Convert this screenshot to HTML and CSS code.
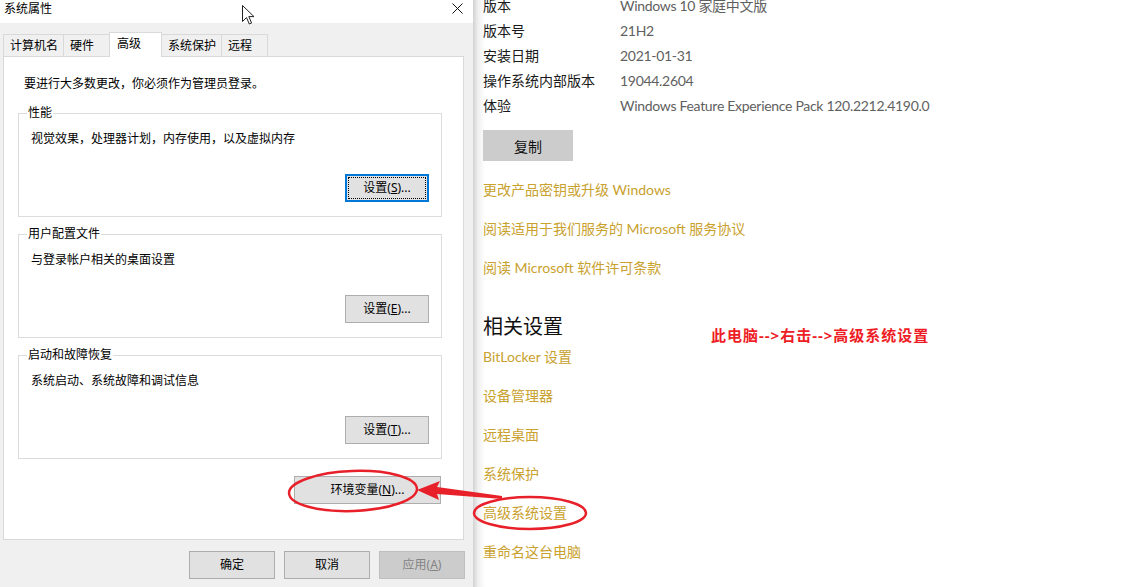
FILE: index.html
```html
<!DOCTYPE html>
<html>
<head>
<meta charset="UTF-8">
<title>系统属性</title>
<link rel="stylesheet" href="styles.css">
</head>
<body>
<div class="screen">
  <div class="dialog">
    <div class="titlebar">
      <span class="title">系统属性</span>
      <svg class="close" width="11" height="11" viewBox="0 0 11 11"><path d="M0.5 0.5L10.5 10.5M10.5 0.5L0.5 10.5" stroke="#111" stroke-width="1"/></svg>
    </div>
    <div class="tabs">
      <span class="tab">计算机名</span>
      <span class="tab">硬件</span>
      <span class="tab active">高级</span>
      <span class="tab">系统保护</span>
      <span class="tab">远程</span>
    </div>
    <div class="panel">
      <p class="note">要进行大多数更改，你必须作为管理员登录。</p>
      <fieldset class="group">
        <legend>性能</legend>
        <p class="desc">视觉效果，处理器计划，内存使用，以及虚拟内存</p>
        <div class="group-actions"><button class="btn focus">设置(<u>S</u>)...</button></div>
      </fieldset>
      <fieldset class="group">
        <legend>用户配置文件</legend>
        <p class="desc">与登录帐户相关的桌面设置</p>
        <div class="group-actions"><button class="btn">设置(<u>E</u>)...</button></div>
      </fieldset>
      <fieldset class="group">
        <legend>启动和故障恢复</legend>
        <p class="desc">系统启动、系统故障和调试信息</p>
        <div class="group-actions"><button class="btn">设置(<u>T</u>)...</button></div>
      </fieldset>
      <div class="env"><button class="btn wide">环境变量(<u>N</u>)...</button></div>
    </div>
    <div class="footer">
      <button class="btn foot">确定</button>
      <button class="btn foot">取消</button>
      <button class="btn foot disabled">应用(<u>A</u>)</button>
    </div>
  </div>

  <div class="settings">
    <dl class="specs">
      <div class="row"><dt>版本</dt><dd>Windows 10 家庭中文版</dd></div>
      <div class="row"><dt>版本号</dt><dd>21H2</dd></div>
      <div class="row"><dt>安装日期</dt><dd>2021-01-31</dd></div>
      <div class="row"><dt>操作系统内部版本</dt><dd>19044.2604</dd></div>
      <div class="row"><dt>体验</dt><dd>Windows Feature Experience Pack 120.2212.4190.0</dd></div>
    </dl>
    <button class="copy">复制</button>
    <ul class="links">
      <li>更改产品密钥或升级 Windows</li>
      <li>阅读适用于我们服务的 Microsoft 服务协议</li>
      <li>阅读 Microsoft 软件许可条款</li>
    </ul>
    <h2 class="heading">相关设置</h2>
    <ul class="links related">
      <li>BitLocker 设置</li>
      <li>设备管理器</li>
      <li>远程桌面</li>
      <li>系统保护</li>
      <li>高级系统设置</li>
      <li>重命名这台电脑</li>
    </ul>
  </div>

  <div class="hint">此电脑--&gt;右击--&gt;高级系统设置</div>

  <svg class="marks" width="1123" height="587" viewBox="0 0 1123 587">
    <ellipse cx="353" cy="491" rx="64" ry="20" fill="none" stroke="#e8202a" stroke-width="2.5" transform="rotate(-2 353 491)"/>
    <ellipse cx="530" cy="513" rx="56" ry="16" fill="none" stroke="#e8202a" stroke-width="2.5"/>
    <polygon points="417,490 440,481 437,487 502,496 502,499 437,494 439,500" fill="#e8202a"/>
  </svg>

  <svg class="cursor" width="13" height="20" viewBox="0 0 13 20">
    <path d="M0.5 0.5L0.5 16.5L4.5 12.5L7.3 19L9.6 18L6.8 11.6L12 11.6Z" fill="#fff" stroke="#222" stroke-width="1"/>
  </svg>
</div>
</body>
</html>
```

FILE: styles.css
```css
* {
    box-sizing: border-box;
}

html, body {
    margin: 0;
    padding: 0;
}

body {
    font-family: "Noto Sans", "Noto Sans CJK SC", sans-serif;
    background: #fff;
    color: #000;
}

.screen {
    position: relative;
    display: flex;
    width: 1123px;
    height: 587px;
    overflow: hidden;
}

/* dialog */

.dialog {
    width: 473px;
    flex: none;
    background: #f0f0f0;
    font-size: 12px;
    line-height: 16px;
}

.titlebar {
    display: flex;
    justify-content: space-between;
    align-items: flex-start;
    height: 23px;
    padding: 1px 10px 0 4px;
    background: #fff;
    margin-bottom: 9px;
}

.close {
    margin-top: 2px;
}

.tabs {
    display: flex;
    align-items: flex-end;
    height: 24px;
    padding-left: 3px;
}

.tab {
    height: 22px;
    min-width: 47px;
    padding: 3px 5px 0 6px;
    border: 1px solid #d9d9d9;
    border-bottom: none;
    margin-right: -1px;
    background: #f0f0f0;
}

.tab.active {
    position: relative;
    z-index: 1;
    height: 25px;
    min-width: 53px;
    margin-bottom: -1px;
    padding: 3px 6px 0 7px;
    background: #fff;
}

.panel {
    width: 461px;
    height: 484px;
    margin-left: 3px;
    padding: 19px 21px 0 14px;
    background: #fff;
    border: 1px solid #d9d9d9;
}

.note {
    margin: 0 0 13px 6px;
}

.group {
    margin: 0 0 9px 0;
    padding: 0 12px 14px 8px;
    border: 1px solid #dcdcdc;
}

.group legend {
    padding: 0 1px;
}

.desc {
    margin: 10px 0 0 4px;
}

.group-actions,
.env {
    display: flex;
    justify-content: flex-end;
}

.group-actions {
    margin-top: 27px;
}

.env {
    margin-top: 17px;
    padding-right: 1px;
}

.btn {
    font: inherit;
    color: #000;
    width: 84px;
    height: 28px;
    padding: 0;
    background: #e1e1e1;
    border: 1px solid #adadad;
}

.btn u {
    text-decoration-thickness: 1px;
}

.btn.focus {
    border: 2px solid #0078d7;
    outline: 1px dotted #000;
    outline-offset: -4px;
}

.btn.wide {
    width: 147px;
}

.footer {
    display: flex;
    justify-content: flex-end;
    gap: 9px;
    padding: 11px 8px 0 0;
}

.btn.foot {
    width: 86px;
}

.btn.disabled {
    background: #cccccc;
    border-color: #bfbfbf;
    color: #838383;
}

/* settings page */

.settings {
    flex: 1;
    padding-left: 10px;
    font-family: Lato, "Noto Sans CJK SC", sans-serif;
    font-size: 14px;
    background: linear-gradient(to right, #d2d2d2, #efefef 5px, #fff 12px);
}

.specs {
    margin: -7px 0 0 0;
}

.row {
    display: flex;
    line-height: 25px;
}

.row dt {
    width: 137px;
    color: #1a1a1a;
}

.row dd {
    margin: 0;
    color: #5f5f5f;
    letter-spacing: -0.3px;
}

.copy {
    display: block;
    margin-top: 12px;
    width: 90px;
    height: 31px;
    font: inherit;
    font-size: 14px;
    color: #111;
    background: #cccccc;
    border: none;
}

.links {
    list-style: none;
    margin: 0;
    padding: 0;
    color: #c9a12e;
    line-height: 20px;
}

.links li {
    margin-top: 19px;
}

.heading {
    margin: 34px 0 0 0;
    font-size: 20px;
    font-weight: normal;
    line-height: 28px;
    color: #111;
}

.related li:first-child {
    margin-top: 7px;
}

/* annotations */

.hint {
    position: absolute;
    left: 711px;
    top: 324px;
    font-size: 15px;
    font-weight: bold;
    line-height: 22px;
    letter-spacing: 1px;
    color: #ee1c25;
}

.marks {
    position: absolute;
    left: 0;
    top: 0;
    pointer-events: none;
}

.cursor {
    position: absolute;
    left: 242px;
    top: 5px;
}
```
